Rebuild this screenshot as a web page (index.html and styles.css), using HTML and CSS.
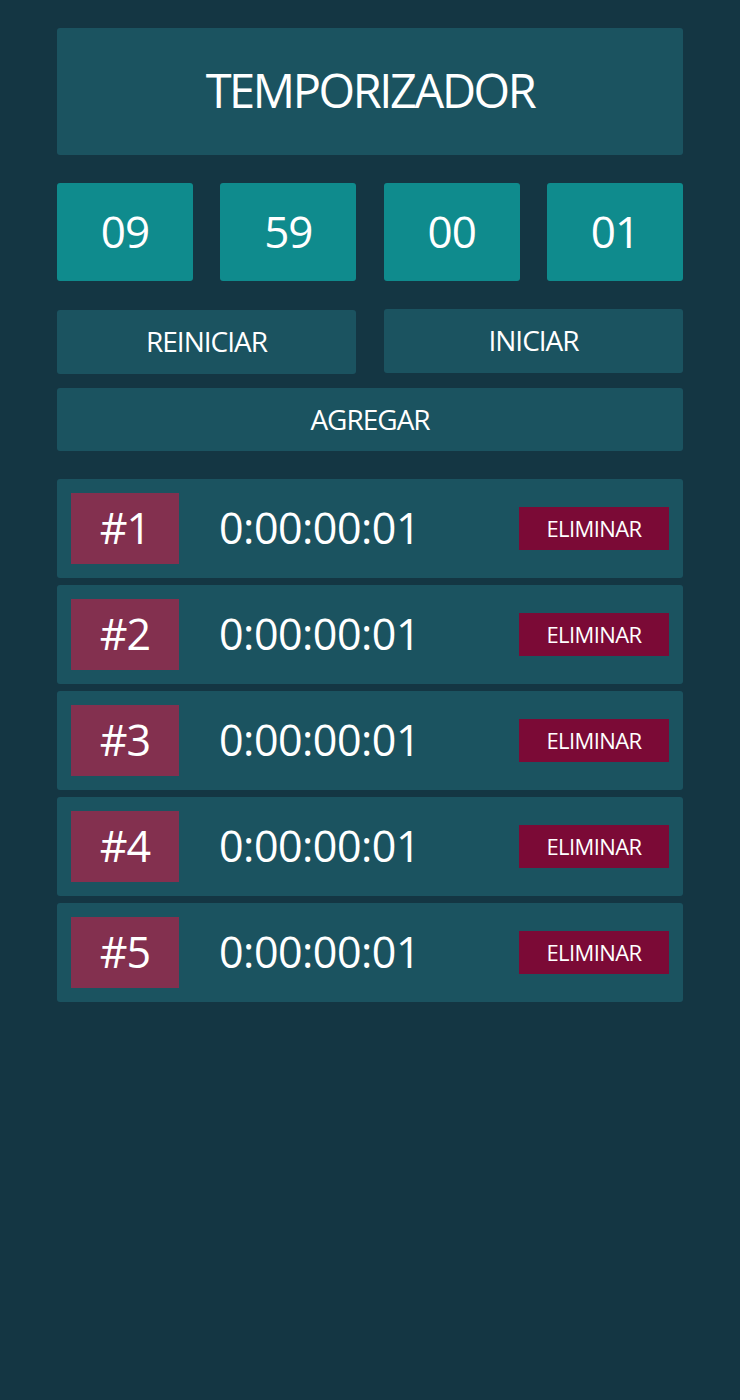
FILE: index.html
```html
<!DOCTYPE html>
<html lang="es">
<head>
<meta charset="utf-8">
<title>Temporizador</title>
<link rel="stylesheet" href="styles.css">
</head>
<body>
<main class="app">
  <header class="title">TEMPORIZADOR</header>
  <section class="digits">
    <div class="digit">09</div>
    <div class="digit">59</div>
    <div class="digit">00</div>
    <div class="digit">01</div>
  </section>
  <section class="controls">
    <button class="btn">REINICIAR</button>
    <button class="btn btn-up">INICIAR</button>
  </section>
  <button class="btn btn-wide">AGREGAR</button>
  <ul class="list">
    <li class="item"><span class="badge">#1</span><span class="time">0:00:00:01</span><button class="del">ELIMINAR</button></li>
    <li class="item"><span class="badge">#2</span><span class="time">0:00:00:01</span><button class="del">ELIMINAR</button></li>
    <li class="item"><span class="badge">#3</span><span class="time">0:00:00:01</span><button class="del">ELIMINAR</button></li>
    <li class="item"><span class="badge">#4</span><span class="time">0:00:00:01</span><button class="del">ELIMINAR</button></li>
    <li class="item"><span class="badge">#5</span><span class="time">0:00:00:01</span><button class="del">ELIMINAR</button></li>
  </ul>
</main>
</body>
</html>
```

FILE: styles.css
```css
* { box-sizing: border-box; }
html, body { margin: 0; padding: 0; }
body {
  background: #143643;
  min-height: 1400px;
  font-family: "Open Sans", "Noto Sans", sans-serif;
  color: #ffffff;
}
.app {
  width: 626px;
  margin: 0 auto;
  padding-top: 28px;
  display: flex;
  flex-direction: column;
}
.title {
  height: 127px;
  background: #1b5360;
  border-radius: 3px;
  display: flex;
  align-items: center;
  justify-content: center;
  font-size: 47px;
  letter-spacing: -2.4px;
  font-weight: 400;
  padding-bottom: 3px;
}
.digits {
  margin-top: 28px;
  display: flex;
  justify-content: space-between;
}
.digit {
  width: 136px;
  height: 98px;
  background: #0f8b8d;
  border-radius: 3px;
  display: flex;
  align-items: center;
  justify-content: center;
  font-size: 44px;
  letter-spacing: -1px;
  padding-bottom: 2px;
}
.controls {
  margin-top: 28px;
  display: flex;
  justify-content: space-between;
  align-items: flex-start;
}
.btn {
  font-family: inherit;
  color: #ffffff;
  background: #1b5360;
  border: 0;
  border-radius: 3px;
  width: 299px;
  height: 64px;
  font-size: 28px;
  letter-spacing: -1px;
  padding: 0 0 2px;
  margin: 0;
}
.controls .btn:first-child { margin-top: 1px; }
.btn-wide {
  width: 626px;
  height: 63px;
  margin-top: 14px;
}
.list {
  list-style: none;
  margin: 28px 0 0;
  padding: 0;
  display: flex;
  flex-direction: column;
  gap: 7px;
}
.item {
  height: 99px;
  background: #1b5360;
  border-radius: 3px;
  padding: 0 14px;
  display: flex;
  align-items: center;
}
.badge {
  width: 108px;
  height: 71px;
  background: #83304f;
  display: flex;
  align-items: center;
  justify-content: center;
  font-size: 43px;
  letter-spacing: -1px;
  padding-bottom: 2px;
}
.time {
  margin-left: 40px;
  font-size: 43px;
  letter-spacing: -0.5px;
  flex: 1;
  padding-bottom: 2px;
}
.del {
  font-family: inherit;
  width: 150px;
  height: 43px;
  background: #7b0a36;
  color: #ffffff;
  border: 0;
  padding: 0 0 2px;
  font-size: 22px;
  letter-spacing: -0.6px;
}
```
